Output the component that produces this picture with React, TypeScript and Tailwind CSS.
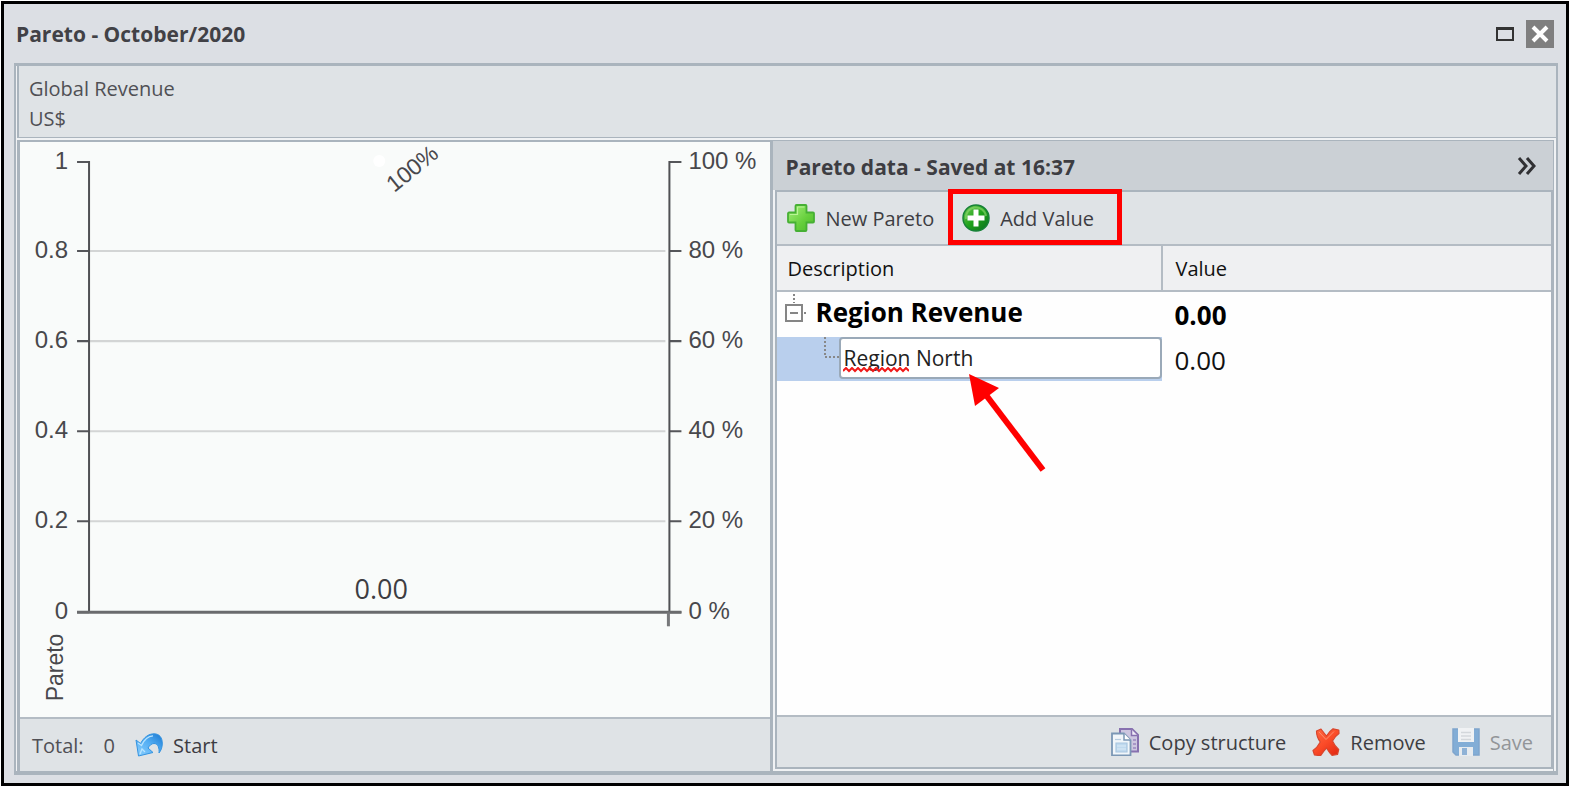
import { useState } from "react";
import type { ReactNode } from "react";

function NewIcon() {
  return (
    <svg className="size-7 shrink-0" viewBox="0 0 28 28" aria-hidden="true">
      <defs>
        <linearGradient id="plus" x1="0" y1="0" x2="1" y2="1">
          <stop offset="0" stopColor="#a6f07c" />
          <stop offset="0.6" stopColor="#66cf3c" />
          <stop offset="1" stopColor="#4cb92c" />
        </linearGradient>
      </defs>
      <path
        d="M9.500 1h9a1 1 0 0 1 1 1v6.500h6.500a1 1 0 0 1 1 1v8a1 1 0 0 1-1 1h-6.500v7.500a1 1 0 0 1-1 1h-9a1 1 0 0 1-1-1v-7.500h-6.500a1 1 0 0 1-1-1v-8a1 1 0 0 1 1-1h6.500v-6.500a1 1 0 0 1 1-1z"
        fill="url(#plus)" stroke="#46b034" strokeWidth="1.800"
      />
      <path d="M10.500 3h7M3 10.500h7.500V3" fill="none" stroke="#b9f596" strokeWidth="1.200" />
    </svg>
  );
}

function AddIcon() {
  return (
    <svg className="size-7 shrink-0" viewBox="0 0 28 28" aria-hidden="true">
      <defs>
        <linearGradient id="ball" x1="0" y1="0" x2="1" y2="1">
          <stop offset="0" stopColor="#74c957" />
          <stop offset="0.5" stopColor="#1fa31c" />
          <stop offset="1" stopColor="#0b6d20" />
        </linearGradient>
      </defs>
      <circle cx="14" cy="14" r="13" fill="url(#ball)" stroke="#178238" strokeWidth="1.500" />
      <path d="M4 15a10 10 0 0 1 20-3" fill="none" stroke="#8fdb72" strokeOpacity="0.6" strokeWidth="2" />
      <path d="M11.500 5.500h5v6h6v5h-6v6h-5v-6h-6v-5h6z" fill="#fff" />
    </svg>
  );
}

function StartIcon() {
  return (
    <svg className="h-6 w-7 shrink-0" viewBox="0 0 28 24" aria-hidden="true">
      <defs>
        <linearGradient id="undo" x1="0" y1="1" x2="1" y2="0">
          <stop offset="0" stopColor="#8fd2ff" />
          <stop offset="0.55" stopColor="#52adf3" />
          <stop offset="1" stopColor="#1a78d0" />
        </linearGradient>
      </defs>
      <path
        d="M1 7l4.500 3.500C9 4 14 .8 19 .8c5.500 0 8.500 4 8.300 10.200-.1 3.500-1.300 6.500-3.300 9 .5-4.500-.8-9.500-5-9.500-2.500 0-4.500 2-6 4.500l5 4.500L3.500 23z"
        fill="url(#undo)" stroke="#3493e0" strokeWidth="1" strokeLinejoin="round"
      />
      <path d="M3 10l3.500 2.500C9 7 13 3 18 2.800M5 21l2-5 3 3" fill="none" stroke="#b8e4ff" strokeWidth="1.300" />
    </svg>
  );
}

function CopyIcon() {
  return (
    <svg className="size-7 shrink-0" viewBox="0 0 28 28" aria-hidden="true">
      <path d="M9 1h12l6 6v16.500H9z" fill="#cdc6e0" stroke="#8771af" strokeWidth="2" />
      <path d="M20.500 1.500v6h6" fill="#f0ecf8" stroke="#8771af" strokeWidth="1.500" />
      <path d="M22 12h3M22 16h3M22 20h3" stroke="#9a86bf" strokeWidth="1.500" />
      <path d="M1 5.500h12l6.500 6.500v15.500H1z" fill="#f1f6fa" stroke="#7b97b5" strokeWidth="1.800" />
      <path d="M13 5.500v6.500h6.500" fill="#fff" stroke="#7b97b5" strokeWidth="1.500" />
      <path d="M4 11.500h6" stroke="#b7cde0" strokeWidth="1.200" />
      <path d="M5 15h11v9H5z" fill="#bfd9ee" stroke="#a9c6df" strokeWidth="1.200" />
      <path d="M6 18h9M6 21h9" stroke="#dbeaf6" strokeWidth="1" />
    </svg>
  );
}

function RemoveIcon() {
  return (
    <svg className="size-7 shrink-0" viewBox="0 0 28 28" aria-hidden="true">
      <defs>
        <linearGradient id="cross" x1="0" y1="0" x2="0.800" y2="1">
          <stop offset="0" stopColor="#ff6c45" />
          <stop offset="0.55" stopColor="#fb4b28" />
          <stop offset="1" stopColor="#e52c14" />
        </linearGradient>
      </defs>
      <path
        d="M4.500 3l4.500-2c1.500 2 3.500 4.500 5.500 7C16.500 5 18.500 2.500 21 .8l5.800 1.200.2 3.500c-3 2-5 4.500-6.500 7.500 1.500 3.500 3.500 6 6.200 8.500l-1.200 5-5.500.8c-2.500-2.300-4-4.800-5.500-7.300-2.500 2.500-4 5-6 7.700l-6-.7-1.500-4.500c3-2 5.500-5 7.300-8.500C6 11 4.500 7.500 4.500 3z"
        fill="url(#cross)" stroke="#d8452c" strokeWidth="1.200" strokeLinejoin="round"
      />
      <path d="M7 4l7 7.500L22 3.500" fill="none" stroke="#ff8f70" strokeWidth="1" />
    </svg>
  );
}

function SaveIcon() {
  return (
    <svg className="size-7 shrink-0" viewBox="0 0 28 28" aria-hidden="true">
      <path d="M1 1h26v26H4l-3-3z" fill="#82add6" stroke="#7fa5cd" strokeWidth="1.500" />
      <path d="M6 0h16v14H6z" fill="#f0f2f4" />
      <path d="M9 4.500h10M9 8h10M9 11.500h10" stroke="#d3d7db" strokeWidth="1.500" />
      <path d="M7 19h14v9H7z" fill="#e7ebef" />
      <path d="M10 20h5v7h-5z" fill="#8fb2d6" />
    </svg>
  );
}

interface ToolButtonProps {
  icon: ReactNode;
  label: string;
  disabled?: boolean;
  marked?: boolean;
}

function ToolButton({ icon, label, disabled, marked }: ToolButtonProps) {
  return (
    <button type="button" disabled={disabled} className="relative flex items-center gap-2.5 text-[#3d3d42] disabled:text-[#929598]">
      {icon}
      <span className="pt-0.5">{label}</span>
      {marked && <span className="absolute -top-3.5 -right-7 -bottom-3 -left-3.5 border-5 border-[#ff0000]" />}
    </button>
  );
}

const ticks = [
  { y: 20, left: "1", right: "100 %" },
  { y: 109, left: "0.8", right: "80 %" },
  { y: 199, left: "0.6", right: "60 %" },
  { y: 289, left: "0.4", right: "40 %" },
  { y: 379, left: "0.2", right: "20 %" },
  { y: 470, left: "0", right: "0 %" },
];

function ParetoChart() {
  return (
    <svg className="block w-full overflow-visible" viewBox="0 0 750 574" role="img" aria-label="Pareto chart">
      <g fill="#48484c" fontFamily="'Liberation Sans', Arial, sans-serif" fontSize="24">
        {ticks.map((t) => (
          <g key={t.left}>
            {t.y > 20 && t.y < 470 && <path d={`M70 ${t.y}H645`} stroke="#d3d5d5" strokeWidth="2" />}
            <path d={`M57 ${t.y}H69M649 ${t.y}H661`} stroke="#55565a" strokeWidth="2" />
            <text x="48" y={t.y + 7} textAnchor="end">{t.left}</text>
            <text x="668" y={t.y + 7}>{t.right}</text>
          </g>
        ))}
        <path d="M69 19V470M649 19V470" fill="none" stroke="#505154" strokeWidth="2" />
        <path d="M57 470H661" stroke="#6a6b6d" strokeWidth="3" />
        <path d="M648 470V484" stroke="#77787a" strokeWidth="3" />
        <circle cx="359" cy="19" r="6" fill="#fff" />
        <text transform="translate(374 51) rotate(-39)" fontSize="23">100%</text>
        <text transform="translate(43 559) rotate(-90)" fontSize="23">Pareto</text>
      </g>
      <text x="361" y="457" textAnchor="middle" fill="#3d3d42" fontSize="27" fontFamily="'Open Sans', sans-serif">0.00</text>
    </svg>
  );
}

function Squiggle() {
  return (
    <svg className="pointer-events-none absolute bottom-1.5 left-1 h-1.5 w-[66px]" viewBox="0 0 66 6" aria-hidden="true">
      <path d="M0 4l3-3 3 3 3-3 3 3 3-3 3 3 3-3 3 3 3-3 3 3 3-3 3 3 3-3 3 3 3-3 3 3 3-3 3 3 3-3 3 3 3-3 3 3" fill="none" stroke="#f01818" strokeWidth="2" />
    </svg>
  );
}

function PointerArrow() {
  return (
    <svg className="pointer-events-none absolute top-9 left-[130px] h-[100px] w-20" viewBox="0 0 80 100" aria-hidden="true">
      <path d="M17 22L74 97" stroke="#ff0000" strokeWidth="6" />
      <path d="M0 1l30 14L6 33z" fill="#ff0000" />
    </svg>
  );
}

export default function App() {
  const [description, setDescription] = useState("Region North");

  return (
    <div className="flex min-h-screen flex-col bg-white p-px font-['Open_Sans',sans-serif] text-[20px] leading-7 text-[#505055]">
      <div className="flex flex-1 flex-col border-3 border-black bg-[#dcdfe4] pr-2 pb-2 pl-2.5">
        <header className="flex h-[59px] items-center justify-between pr-1 pl-0.5">
          <h1 className="text-[21px] font-bold text-[#414146]">Pareto - October/2020</h1>
          <div className="flex items-center gap-3">
            <button type="button" aria-label="Maximize" className="h-3.5 w-[18px] border-2 border-t-3 border-[#333]" />
            <button type="button" aria-label="Close" className="flex size-7 items-center justify-center bg-[#7f7f7f]">
              <svg className="size-5" viewBox="0 0 20 20" aria-hidden="true">
                <path d="M3 3l14 14M17 3L3 17" stroke="#fff" strokeWidth="4" />
              </svg>
            </button>
          </div>
        </header>

        <main className="flex flex-1 flex-col border-2 border-t-3 border-b-4 border-[#aab4bd] bg-[#f0f2f4] pl-px">
          <section className="border-b border-l-2 border-[#aab4bd] bg-[#dfe3e6] px-2.5 pt-2 pb-[3px] leading-[30px]">
            <p>Global Revenue</p>
            <p>US$</p>
          </section>

          <div className="mt-0.5 grid flex-1 grid-cols-[756fr_782fr]">
            <section className="flex flex-col border-t-2 border-r-3 border-l-3 border-[#aab4bd] bg-[#f9fbfa]">
              <div className="flex-1">
                <ParetoChart />
              </div>
              <footer className="flex h-[54px] items-center border-t-2 border-[#b4bcc4] bg-[#dfe3e6] px-3">
                <span className="pt-0.5">Total:</span>
                <output className="mr-5 ml-5 pt-0.5">0</output>
                <ToolButton icon={<StartIcon />} label="Start" />
              </footer>
            </section>

            <section className="mr-0.5 flex flex-col border-t border-r border-[#aab4bd]">
              <div className="flex h-[49px] items-center justify-between bg-[#cbd0d5] pr-4 pl-3">
                <h2 className="pt-0.5 text-[21px] font-bold text-[#3d3d42]">Pareto data - Saved at 16:37</h2>
                <button type="button" aria-label="Collapse panel" className="text-[#303033]">
                  <svg className="size-5" viewBox="0 0 20 20" fill="none" stroke="currentColor" strokeWidth="3" aria-hidden="true">
                    <path d="M2 2l7 8-7 8M10 2l7 8-7 8" />
                  </svg>
                </button>
              </div>
              <div className="mb-0.5 ml-0.5 flex flex-1 flex-col border-2 border-[#aab4bd]">
                <div className="flex h-[54px] items-center gap-7 border-b-2 border-[#b4bcc4] bg-[#dfe3e6] px-2.5">
                  <ToolButton icon={<NewIcon />} label="New Pareto" />
                  <ToolButton icon={<AddIcon />} label="Add Value" marked />
                </div>

                <div className="flex-1 bg-[#fefefe] text-[#111]">
                  <table className="w-full table-fixed border-collapse text-left">
                    <thead className="bg-[#eff0f2]">
                      <tr className="h-[45px] border-b-2 border-[#b4bcc4]">
                        <th className="w-[385px] border-r-2 border-[#b4bcc4] px-2.5 pt-0.5 font-normal">Description</th>
                        <th className="px-3 pt-0.5 font-normal">Value</th>
                      </tr>
                    </thead>
                    <tbody>
                      <tr className="h-[46px] text-[26px] font-bold text-black">
                        <td className="p-0 pb-1.5">
                          <div className="flex items-center pl-2">
                            <button type="button" aria-label="Collapse Region Revenue">
                              <svg className="block h-9 w-[22px]" viewBox="0 0 22 36" fill="none" stroke="#858585" strokeWidth="2" aria-hidden="true">
                                <path d="M9 0v9M19 19h3" strokeDasharray="2 2" />
                                <path d="M1 11h16v16H1zM5 19h8" />
                              </svg>
                            </button>
                            <span className="ml-2">Region Revenue</span>
                          </div>
                        </td>
                        <td className="p-0 pl-3">0.00</td>
                      </tr>
                      <tr className="h-11">
                        <td className="bg-[#b9cfed] p-0">
                          <div className="flex pb-0.5 pl-[46px]">
                            <svg className="h-10 w-4 shrink-0" viewBox="0 0 16 40" fill="none" stroke="#888" strokeWidth="2" aria-hidden="true">
                              <path d="M2 0v20h14" strokeDasharray="2 2" />
                            </svg>
                            <div className="relative flex-1">
                              <input
                                aria-label="Description"
                                className="h-[42px] w-full rounded border-2 border-[#9aa9b8] bg-white px-0.5 text-[21px] text-[#222] outline-none"
                                value={description}
                                onChange={(e) => setDescription(e.target.value)}
                              />
                              <Squiggle />
                              <PointerArrow />
                            </div>
                          </div>
                        </td>
                        <td className="p-0 pt-0.5 pl-3 text-[26px]">0.00</td>
                      </tr>
                    </tbody>
                  </table>
                </div>

                <footer className="flex h-[52px] items-center justify-end gap-[26px] border-t-2 border-[#b4bcc4] bg-[#dfe3e6] px-[18px]">
                  <ToolButton icon={<CopyIcon />} label="Copy structure" />
                  <ToolButton icon={<RemoveIcon />} label="Remove" />
                  <ToolButton icon={<SaveIcon />} label="Save" disabled />
                </footer>
              </div>
            </section>
          </div>
        </main>
      </div>
    </div>
  );
}
